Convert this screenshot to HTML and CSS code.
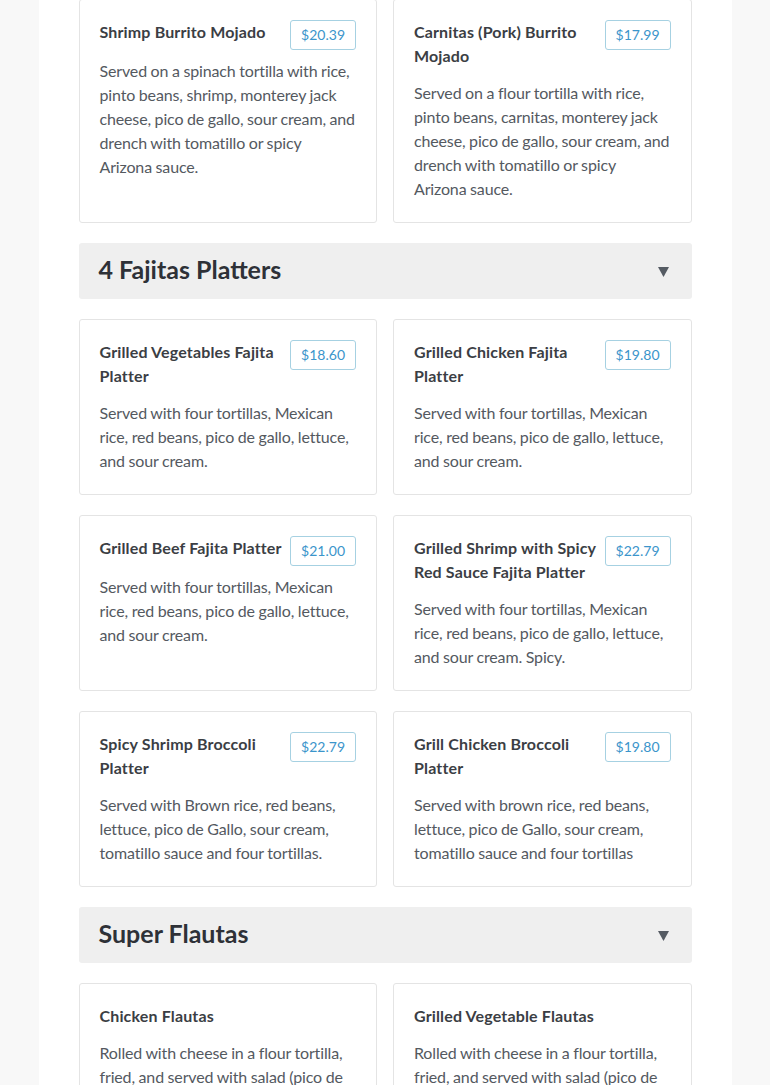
FILE: index.html
```html
<!DOCTYPE html>
<html>
<head>
<meta charset="utf-8">
<link rel="stylesheet" href="styles.css">
</head>
<body>
<div class="page">
  <div class="menu">
    <div class="grid first">
      <div class="card">
        <div class="card-head">
          <div class="title">Shrimp Burrito Mojado</div>
          <div class="price">$20.39</div>
        </div>
        <p class="desc">Served on a spinach tortilla with rice, pinto beans, shrimp, monterey jack cheese, pico de gallo, sour cream, and<br>drench with tomatillo or spicy<br>Arizona sauce.</p>
      </div>
      <div class="card">
        <div class="card-head">
          <div class="title">Carnitas (Pork) Burrito Mojado</div>
          <div class="price">$17.99</div>
        </div>
        <p class="desc">Served on a flour tortilla with rice, pinto beans, carnitas, monterey jack cheese, pico de gallo, sour cream, and<br>drench with tomatillo or spicy<br>Arizona sauce.</p>
      </div>
    </div>

    <div class="section-head">
      <h2>4 Fajitas Platters</h2>
      <svg class="caret" width="11" height="10" viewBox="0 0 11 10"><polygon points="0,0 11,0 5.5,10" fill="#555b63"/></svg>
    </div>

    <div class="grid">
      <div class="card">
        <div class="card-head">
          <div class="title">Grilled Vegetables Fajita Platter</div>
          <div class="price">$18.60</div>
        </div>
        <p class="desc">Served with four tortillas, Mexican rice, red beans, pico de gallo, lettuce, and sour cream.</p>
      </div>
      <div class="card">
        <div class="card-head">
          <div class="title">Grilled Chicken Fajita Platter</div>
          <div class="price">$19.80</div>
        </div>
        <p class="desc">Served with four tortillas, Mexican rice, red beans, pico de gallo, lettuce, and sour cream.</p>
      </div>
      <div class="card">
        <div class="card-head">
          <div class="title">Grilled Beef Fajita Platter</div>
          <div class="price">$21.00</div>
        </div>
        <p class="desc">Served with four tortillas, Mexican rice, red beans, pico de gallo, lettuce, and sour cream.</p>
      </div>
      <div class="card">
        <div class="card-head">
          <div class="title">Grilled Shrimp with Spicy Red Sauce Fajita Platter</div>
          <div class="price">$22.79</div>
        </div>
        <p class="desc">Served with four tortillas, Mexican rice, red beans, pico de gallo, lettuce, and sour cream. Spicy.</p>
      </div>
      <div class="card">
        <div class="card-head">
          <div class="title">Spicy Shrimp Broccoli Platter</div>
          <div class="price">$22.79</div>
        </div>
        <p class="desc">Served with Brown rice, red beans, lettuce, pico de Gallo, sour cream, tomatillo sauce and four tortillas.</p>
      </div>
      <div class="card">
        <div class="card-head">
          <div class="title">Grill Chicken Broccoli Platter</div>
          <div class="price">$19.80</div>
        </div>
        <p class="desc">Served with brown rice, red beans, lettuce, pico de Gallo, sour cream, tomatillo sauce and four tortillas</p>
      </div>
    </div>

    <div class="section-head">
      <h2>Super Flautas</h2>
      <svg class="caret" width="11" height="10" viewBox="0 0 11 10"><polygon points="0,0 11,0 5.5,10" fill="#555b63"/></svg>
    </div>

    <div class="grid">
      <div class="card">
        <div class="card-head">
          <div class="title">Chicken Flautas</div>
        </div>
        <p class="desc">Rolled with cheese in a flour tortilla, fried, and served with salad (pico de gallo, lettuce, sour cream) and tomatillo sauce.</p>
      </div>
      <div class="card">
        <div class="card-head">
          <div class="title">Grilled Vegetable Flautas</div>
        </div>
        <p class="desc">Rolled with cheese in a flour tortilla, fried, and served with salad (pico de gallo, lettuce, sour cream) and tomatillo sauce.</p>
      </div>
    </div>
  </div>
</div>
</body>
</html>
```

FILE: styles.css
```css
html, body {
  margin: 0;
  padding: 0;
  overflow: hidden;
}
body {
  background: #f8f8f8;
  font-family: "Lato", "Liberation Sans", sans-serif;
  color: #3b3e44;
}
.page {
  width: 693px;
  margin: 0 auto;
  background: #ffffff;
  min-height: 1085px;
}
.menu {
  padding: 0 40px 40px 40px;
  display: flex;
  flex-direction: column;
  gap: 20px;
}
.grid {
  display: grid;
  grid-template-columns: 1fr 1fr;
  column-gap: 16px;
  row-gap: 20px;
}
.grid.first {
  margin-top: -1px;
}
.card {
  border: 1px solid #e4e4e4;
  border-radius: 3px;
  padding: 20px 20px 21px 20px;
  background: #fff;
}
.card-head {
  display: flex;
  align-items: flex-start;
  gap: 8px;
}
.title {
  flex: 1;
  font-size: 16px;
  font-weight: 700;
  line-height: 24px;
  letter-spacing: 0.15px;
  color: #3b3e44;
  margin-bottom: 4px;
}
.price {
  flex: none;
  height: 28px;
  line-height: 28px;
  padding: 0 10px;
  border: 1px solid #a6d1e2;
  border-radius: 3px;
  color: #3b95cb;
  font-size: 14px;
}
.desc {
  margin: 9px 0 0 0;
  font-size: 16px;
  line-height: 24px;
  letter-spacing: -0.15px;
  word-spacing: -0.3px;
  color: #54595f;
}
.section-head {
  height: 56px;
  box-sizing: border-box;
  background: #efefef;
  border-radius: 3px;
  display: flex;
  align-items: center;
  justify-content: space-between;
  padding: 0 23px 4px 20px;
}
.section-head h2 {
  margin: 0;
  font-size: 25px;
  font-weight: 700;
  line-height: 30px;
  color: #2e3137;
}
.caret {
  display: block;
  margin-top: 5px;
}
```
